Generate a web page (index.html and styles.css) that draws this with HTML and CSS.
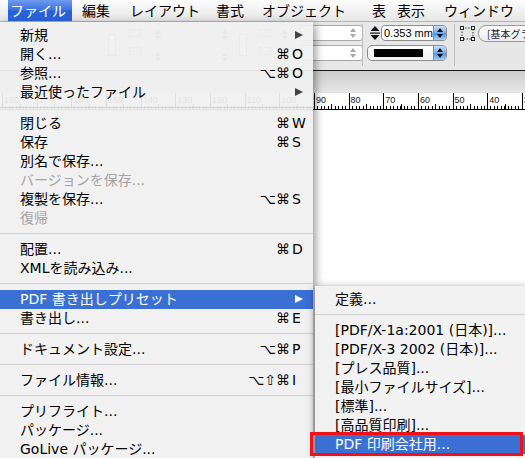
FILE: index.html
```html
<!DOCTYPE html>
<html lang="ja">
<head>
<meta charset="utf-8">
<title>ファイル メニュー</title>
<link rel="stylesheet" href="styles.css">
</head>
<body>
<div class="screen">
  <div class="menubar">
    <span class="mb-item open">ファイル</span>
    <span class="mb-item">編集</span>
    <span class="mb-item">レイアウト</span>
    <span class="mb-item">書式</span>
    <span class="mb-item">オブジェクト</span>
    <span class="mb-item">表</span>
    <span class="mb-item">表示</span>
    <span class="mb-item">ウィンドウ</span>
  </div>

  <div class="control">
    <div class="group g1">
      <span class="para"></span>
      <span class="pair ind"><i></i><i></i></span>
      <span class="pair step"><i class="ud"></i><i class="ud"></i></span>
      <span class="pair step s2"><i class="ud"></i><i class="ud"></i></span>
      <span class="para p2"></span>
      <span class="pair ind i2"><i></i><i></i></span>
      <span class="pair step s3"><i class="ud"></i><i class="ud"></i></span>
      <span class="fields">
        <span class="field"><i class="ud light"></i></span>
        <span class="field"><i class="ud light"></i></span>
      </span>
    </div>
    <span class="divider"></span>
    <div class="group g2">
      <div class="row row-weight">
        <svg class="weight-ico" width="10" height="14" viewBox="0 0 10 14">
          <polygon points="5,0 9.5,5 0.5,5" fill="#111"/>
          <rect x="0" y="6.5" width="10" height="1.2" fill="#111"/>
          <polygon points="0.5,9 9.5,9 5,14" fill="#111"/>
        </svg>
        <span class="combo"><span class="combo-text">0.353 mm</span><span class="aqua"><i class="ud dark"></i></span></span>
      </div>
      <div class="row">
        <span class="popup"><span class="swatch"></span><span class="aqua"><i class="ud dark"></i></span></span>
      </div>
    </div>
    <span class="divider"></span>
    <div class="group g3">
      <div class="row">
        <svg class="frame-ico" width="15" height="15" viewBox="0 0 15 15">
          <rect x="2" y="2" width="11" height="11" fill="#e4e4e4" stroke="#333" stroke-width="1" stroke-dasharray="1.5 1.5"/>
          <rect x="0.5" y="0.5" width="3" height="3" fill="#fff" stroke="#222"/>
          <rect x="11.5" y="0.5" width="3" height="3" fill="#fff" stroke="#222"/>
          <rect x="0.5" y="11.5" width="3" height="3" fill="#fff" stroke="#222"/>
          <rect x="11.5" y="11.5" width="3" height="3" fill="#fff" stroke="#222"/>
        </svg>
        <span class="pill">[基本グラフィックフレーム]</span>
      </div>
    </div>
  </div>

  <div class="band"></div>

  <div class="ruler">
    <span class="tick">180</span><span class="tick">170</span><span class="tick">160</span><span class="tick">150</span>
    <span class="tick">140</span><span class="tick">130</span><span class="tick">120</span><span class="tick">110</span>
    <span class="tick">100</span><span class="tick">90</span><span class="tick">80</span><span class="tick">70</span>
    <span class="tick">60</span><span class="tick">50</span><span class="tick">40</span><span class="tick">30</span>
  </div>

  <div class="page"></div>

  <div class="menu main">
    <div class="item"><span class="label">新規</span><span class="mods"></span><span class="key"><i class="arrow"></i></span></div>
    <div class="item"><span class="label">開く...</span><span class="mods">⌘</span><span class="key">O</span></div>
    <div class="item"><span class="label">参照...</span><span class="mods">⌥⌘</span><span class="key">O</span></div>
    <div class="item"><span class="label">最近使ったファイル</span><span class="mods"></span><span class="key"><i class="arrow"></i></span></div>
    <div class="sep"></div>
    <div class="item"><span class="label">閉じる</span><span class="mods">⌘</span><span class="key">W</span></div>
    <div class="item"><span class="label">保存</span><span class="mods">⌘</span><span class="key">S</span></div>
    <div class="item"><span class="label">別名で保存...</span></div>
    <div class="item disabled"><span class="label">バージョンを保存...</span></div>
    <div class="item"><span class="label">複製を保存...</span><span class="mods">⌥⌘</span><span class="key">S</span></div>
    <div class="item disabled"><span class="label">復帰</span></div>
    <div class="sep"></div>
    <div class="item"><span class="label">配置...</span><span class="mods">⌘</span><span class="key">D</span></div>
    <div class="item"><span class="label">XMLを読み込み...</span></div>
    <div class="sep"></div>
    <div class="item active"><span class="label">PDF 書き出しプリセット</span><span class="mods"></span><span class="key"><i class="arrow"></i></span></div>
    <div class="item"><span class="label">書き出し...</span><span class="mods">⌘</span><span class="key">E</span></div>
    <div class="sep"></div>
    <div class="item"><span class="label">ドキュメント設定...</span><span class="mods">⌥⌘</span><span class="key">P</span></div>
    <div class="sep"></div>
    <div class="item"><span class="label">ファイル情報...</span><span class="mods">⌥⇧⌘</span><span class="key">I</span></div>
    <div class="sep"></div>
    <div class="item"><span class="label">プリフライト...</span></div>
    <div class="item"><span class="label">パッケージ...</span></div>
    <div class="item"><span class="label">GoLive パッケージ...</span></div>
  </div>

  <div class="menu sub">
    <div class="item"><span class="label">定義...</span></div>
    <div class="sep"></div>
    <div class="item"><span class="label">[PDF/X-1a:2001 (日本)]...</span></div>
    <div class="item"><span class="label">[PDF/X-3 2002 (日本)]...</span></div>
    <div class="item"><span class="label">[プレス品質]...</span></div>
    <div class="item"><span class="label">[最小ファイルサイズ]...</span></div>
    <div class="item"><span class="label">[標準]...</span></div>
    <div class="item"><span class="label">[高品質印刷]...</span></div>
    <div class="item active"><span class="label">PDF 印刷会社用...</span></div>
  </div>

  <div class="callout"></div>
</div>
</body>
</html>
```

FILE: styles.css
```css
* {
  box-sizing: border-box;
  margin: 0;
  padding: 0;
}

html, body {
  width: 525px;
  height: 458px;
  overflow: hidden;
  background: #fff;
}

body {
  font-family: "DejaVu Sans", "Noto Sans CJK JP", sans-serif;
  color: #000;
}

.screen {
  position: relative;
  width: 525px;
  height: 458px;
  overflow: hidden;
  display: flex;
  flex-direction: column;
}

/* ---------- menu bar ---------- */
.menubar {
  flex: 0 0 22px;
  display: grid;
  grid-template-columns: 64px 48px 86px 46px 110px 25px 47px 1fr;
  padding-left: 8px;
  background: linear-gradient(#fdfdfd, #efefef 60%, #e6e6e6);
  border-bottom: 1px solid #b4b4b4;
  font: 14px/21px "Noto Sans CJK JP", sans-serif;
}

.mb-item {
  padding-left: 10px;
  white-space: nowrap;
}

.mb-item.open {
  padding-left: 2px;
  color: #fff;
  background: linear-gradient(#6d9cf0, #3d74e0 45%, #2660d8 55%, #2a66dc);
}

/* ---------- control panel ---------- */
.control {
  flex: 0 0 49px;
  display: flex;
  padding-top: 3px;
  background: #e7e7e7;
  border-bottom: 1px solid #1c1c1c;
}

.group {
  flex: 0 0 auto;
  display: flex;
  flex-direction: column;
  gap: 4px;
}

.row {
  display: flex;
  align-items: center;
  height: 16px;
}

.g1 {
  flex-direction: row;
  align-items: flex-start;
  width: 362px;
  padding-left: 108px;
}

.para {
  width: 20px;
  height: 22px;
  margin-top: 9px;
  padding: 3px;
  border: 1px solid #9a9a9a;
  background: repeating-linear-gradient(#6a6a6a 0 1px, transparent 1px 3px) content-box, #f4f4f4;
}

.para.p2 {
  width: 18px;
  margin-left: 6px;
}

.pair {
  display: flex;
  flex-direction: column;
  gap: 10px;
  margin-top: 4px;
}

.ind {
  margin-left: 9px;
}

.ind.i2 {
  margin-left: 8px;
}

.ind i {
  display: block;
  width: 12px;
  height: 8px;
  border: 1px dotted #777;
}

.step {
  margin-left: 9px;
}

.step.s2 {
  margin-left: 55px;
}

.step.s3 {
  margin-left: 6px;
}

.ud {
  display: flex;
  flex-direction: column;
  align-items: center;
  justify-content: center;
  gap: 2px;
  width: 8px;
  height: 12px;
}

.ud::before,
.ud::after {
  content: "";
  width: 0;
  height: 0;
  border-left: 3px solid transparent;
  border-right: 3px solid transparent;
}

.ud::before {
  border-bottom: 4px solid #777;
}

.ud::after {
  border-top: 4px solid #777;
}

.ud.light::before {
  border-bottom-color: #a9a9a9;
}

.ud.light::after {
  border-top-color: #a9a9a9;
}

.ud.dark::before {
  border-bottom-color: #111;
}

.ud.dark::after {
  border-top-color: #111;
}

.fields {
  display: flex;
  flex-direction: column;
  gap: 4px;
  margin-left: 7px;
}

.field {
  display: flex;
  align-items: center;
  justify-content: flex-end;
  width: 63px;
  height: 16px;
  padding-right: 5px;
  background: #fff;
  border: 1px solid #a9a9a9;
  border-radius: 3px;
}

.divider {
  flex: 0 0 1px;
  margin: -1px 0 4px;
  background: #bcbcbc;
}

.g2 {
  width: 91px;
}

.row-weight {
  padding-left: 7px;
}

.weight-ico {
  flex: 0 0 10px;
}

.combo {
  display: flex;
  width: 66px;
  height: 16px;
  margin-left: 1px;
  overflow: hidden;
  background: #fff;
  border: 1px solid #8d8d8d;
  border-radius: 4px;
}

.combo-text {
  flex: 1;
  padding-left: 2px;
  font: 11px/14px "Liberation Sans", sans-serif;
  color: #000;
  white-space: nowrap;
}

.aqua {
  display: flex;
  align-items: center;
  justify-content: center;
  flex: 0 0 13px;
  height: 100%;
  background: linear-gradient(#c8e0fa, #7fb3ee 45%, #4f93e6 55%, #a9d0fa);
  border-left: 1px solid #6a8fc0;
}

.popup {
  display: flex;
  align-items: center;
  width: 80px;
  height: 16px;
  margin-left: 4px;
  overflow: hidden;
  background: linear-gradient(#ffffff, #f1f1f1);
  border: 1px solid #8d8d8d;
  border-radius: 5px;
}

.swatch {
  width: 49px;
  height: 8px;
  margin-left: 6px;
  background: #000;
}

.popup .aqua {
  margin-left: auto;
}

.g3 {
  padding-left: 5px;
}

.frame-ico {
  flex: 0 0 15px;
}

.pill {
  height: 17px;
  margin-left: 3px;
  padding: 0 8px;
  font: 10px/15px "Noto Sans CJK JP", sans-serif;
  color: #1a1a40;
  white-space: nowrap;
  background: linear-gradient(#ffffff, #ececec);
  border: 1px solid #9a9a9a;
  border-radius: 8px;
}

/* ---------- band & ruler ---------- */
.band {
  flex: 0 0 22px;
  background: linear-gradient(#cdcdcd, #dddddd 60%, #e6e6e6);
}

.ruler {
  flex: 0 0 17px;
  display: flex;
  padding-left: 2px;
  overflow: hidden;
  background: #fff;
  border-bottom: 1px solid #000;
}

.tick {
  position: relative;
  flex: 0 0 34.667px;
  padding: 2px 0 0 1px;
  font: 9px/10px "Liberation Sans", sans-serif;
  color: #1a1a1a;
  border-left: 1px solid #000;
  background: repeating-linear-gradient(to right, transparent 0 2.467px, #000 2.467px 3.467px) left bottom / 100% 3px no-repeat;
}

.tick::after {
  content: "";
  position: absolute;
  left: 16.5px;
  bottom: 0;
  width: 1px;
  height: 5px;
  background: #000;
}

.page {
  flex: 1;
  background: #fff;
}

/* ---------- menus ---------- */
.menu {
  position: absolute;
  padding-top: 4px;
  padding-bottom: 6px;
  font-size: 14px;
}

.main {
  left: 0;
  top: 22px;
  width: 313px;
  background: rgba(240, 240, 240, 0.93);
  box-shadow: 2px 3px 9px rgba(0, 0, 0, 0.45);
}

.sub {
  left: 315px;
  top: 286px;
  width: 215px;
  background: rgba(241, 241, 241, 0.96);
  box-shadow: 0 2px 8px rgba(0, 0, 0, 0.45);
}

.item {
  display: grid;
  grid-template-columns: 1fr auto 14px;
  height: 19px;
  padding: 0 7px 0 20px;
  line-height: 19px;
  white-space: nowrap;
}

.mods {
  margin-right: 2px;
  text-align: right;
  font-family: "DejaVu Sans", sans-serif;
}

.key {
  display: flex;
  align-items: center;
  font-family: "DejaVu Sans", sans-serif;
}

.arrow {
  width: 0;
  height: 0;
  margin: -2px 0 0 3px;
  border-left: 8px solid #444;
  border-top: 4.5px solid transparent;
  border-bottom: 4.5px solid transparent;
}

.item.disabled {
  color: #a4a4a4;
}

.item.active {
  color: #fff;
  background: #3a6fd4;
}

.item.active .arrow {
  border-left-color: #fff;
}

.sep {
  height: 12px;
  background: linear-gradient(transparent 5px, #cfcfcf 5px 6px, transparent 6px);
}

/* annotation box */
.callout {
  position: absolute;
  left: 310px;
  top: 432px;
  width: 213px;
  height: 24px;
  border: 3px solid #f01018;
}
```
